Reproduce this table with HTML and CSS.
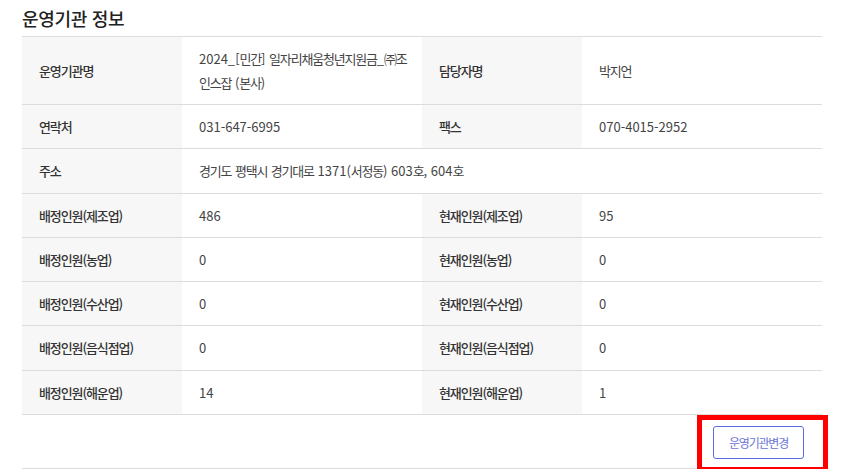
FILE: index.html
```html
<!DOCTYPE html>
<html lang="ko">
<head>
<meta charset="utf-8">
<link rel="stylesheet" href="styles.css">
</head>
<body>
<div class="page">
  <h2 class="title">운영기관 정보</h2>
  <table class="info">
    <colgroup>
      <col class="c-label"><col class="c-value"><col class="c-label"><col class="c-value">
    </colgroup>
    <tr>
      <th>운영기관명</th>
      <td class="nowrap">2024_[<span class="k">민간</span>] <span class="k">일자리채움청년지원금</span>_<span class="k">㈜조</span><br><span class="k">인스잡</span> (<span class="k">본사</span>)</td>
      <th>담당자명</th><td><span class="k">박지언</span></td>
    </tr>
    <tr><th>연락처</th><td>031-647-6995</td><th>팩스</th><td>070-4015-2952</td></tr>
    <tr><th>주소</th><td colspan="3"><span class="k">경기도</span> <span class="k">평택시</span> <span class="k">경기대로</span> 1371(<span class="k">서정동</span>) 603<span class="k">호</span>, 604<span class="k">호</span></td></tr>
    <tr><th>배정인원(제조업)</th><td>486</td><th>현재인원(제조업)</th><td>95</td></tr>
    <tr><th>배정인원(농업)</th><td>0</td><th>현재인원(농업)</th><td>0</td></tr>
    <tr><th>배정인원(수산업)</th><td>0</td><th>현재인원(수산업)</th><td>0</td></tr>
    <tr><th>배정인원(음식점업)</th><td>0</td><th>현재인원(음식점업)</th><td>0</td></tr>
    <tr><th>배정인원(해운업)</th><td>14</td><th>현재인원(해운업)</th><td>1</td></tr>
  </table>
  <div class="actions">
    <button class="btn">운영기관변경</button>
    <span class="highlight"></span>
  </div>
</div>
</body>
</html>
```
FILE: styles.css
```css
html, body {
  margin: 0;
  padding: 0;
  background: #fff;
}
body {
  font-family: "Noto Sans CJK KR", "Noto Sans", sans-serif;
  color: #333;
}
.page {
  padding: 0 46px 0 22px;
  width: 800px;
}
.title {
  margin: 0;
  height: 36px;
  line-height: 36px;
  font-size: 18px;
  font-weight: 500;
  color: #222;
  letter-spacing: -0.3px;
}
.info {
  width: 800px;
  border-collapse: collapse;
  table-layout: fixed;
  font-size: 13px;
  border-top: 1px solid #dcdcdc;
}
.c-label { width: 160px; }
.c-value { width: 240px; }
.info th, .info td {
  padding: 10px 17px;
  line-height: 23.3px;
  text-align: left;
  vertical-align: middle;
  border-bottom: 1px solid #dcdcdc;
}
.info th {
  background: #f7f7f7;
  font-weight: 500;
  color: #333;
  letter-spacing: -1.1px;
}
.info td {
  font-weight: 400;
  color: #444;
}
.info td.nowrap {
  white-space: nowrap;
  line-height: 23.5px;
}
.k {
  letter-spacing: -1.2px;
}
.actions {
  position: relative;
  height: 53px;
  border-bottom: 1px solid #dcdcdc;
  display: flex;
  justify-content: flex-end;
  align-items: flex-start;
  padding-right: 18px;
}
.btn {
  margin-top: 11px;
  width: 91px;
  height: 33px;
  border: 1px solid #5b6ee1;
  border-radius: 3px;
  background: #fff;
  color: #6c75d6;
  font-family: "Noto Sans CJK KR", "Noto Sans", sans-serif;
  font-size: 12px;
  letter-spacing: -1.2px;
  padding: 0;
}
.highlight {
  position: absolute;
  left: 675px;
  top: 0;
  width: 121px;
  height: 47px;
  border: 5px solid #ff0000;
  pointer-events: none;
}
```
